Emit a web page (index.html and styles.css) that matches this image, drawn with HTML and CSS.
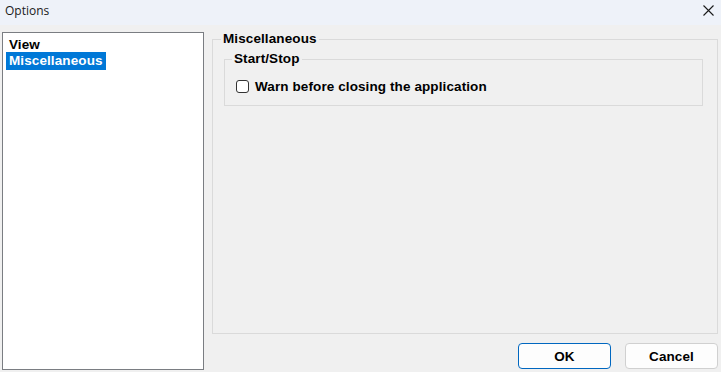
FILE: index.html
```html
<!DOCTYPE html>
<html lang="en">

<head>
    <meta charset="UTF-8" />
    <meta name="viewport" content="width=device-width, initial-scale=1.0" />
    <title>Options</title>
    <link rel="stylesheet" href="styles.css">
</head>

<body>
    <div class="titlebar">
        <span class="title">Options</span>
        <svg class="close" width="11" height="11" viewBox="0 0 11 11">
            <path d="M0.5 0.5 L10.5 10.5 M10.5 0.5 L0.5 10.5" stroke="#1a1a1a" stroke-width="1.1" fill="none" />
        </svg>
    </div>

    <div class="main">
        <ul class="pages">
            <li>View</li>
            <li class="selected">Miscellaneous</li>
        </ul>

        <div class="right">
            <fieldset class="group outer">
                <legend>Miscellaneous</legend>
                <fieldset class="group inner">
                    <legend>Start/Stop</legend>
                    <label class="check">
                        <span class="box"></span>
                        Warn before closing the application
                    </label>
                </fieldset>
            </fieldset>

            <div class="buttons">
                <button type="button" class="btn default">OK</button>
                <button type="button" class="btn">Cancel</button>
            </div>
        </div>
    </div>
</body>

</html>
```

FILE: styles.css
```css
html,
body {
    margin: 0;
    height: 100%;
}

body {
    background-color: #f0f0f0;
    font-family: "Liberation Sans", Arial, sans-serif;
    font-size: 13.5px;
    letter-spacing: 0.1px;
    font-weight: bold;
    color: #000;
    display: flex;
    flex-direction: column;
    overflow: hidden;
}

.titlebar {
    height: 25px;
    box-sizing: border-box;
    background-color: #eef2f9;
    display: flex;
    align-items: center;
    justify-content: space-between;
    padding: 0 7px 5px 5px;
    flex: none;
}

.title {
    font-family: "Open Sans", "Noto Sans", sans-serif;
    font-weight: normal;
    font-size: 12px;
    letter-spacing: 0;
    color: #1a1a1a;
}

.main {
    flex: 1;
    display: flex;
    gap: 8px;
    padding: 7px 3px 2px 2px;
    min-height: 0;
}

.pages {
    margin: 0;
    padding: 4px 0 0 5px;
    list-style: none;
    background: #fff;
    border: 1px solid #7a7d82;
    box-sizing: border-box;
    width: 202px;
}

.pages li {
    line-height: 16px;
    padding: 0 3px 0 1px;
    clear: both;
    float: left;
}

.pages li.selected {
    background-color: #0078d7;
    color: #fff;
    margin-left: -2px;
    padding: 1px 3px 1px 3px;
    margin-top: -1px;
}

.right {
    flex: 1;
    display: flex;
    flex-direction: column;
}

.group {
    margin: 0;
    border: 1px solid #dadada;
    min-width: 0;
}

.group legend {
    padding: 0 2px;
    line-height: 14px;
}

.outer {
    flex: 1;
    padding: 2px 14px 0 8px;
}

.inner {
    margin: 4px 0 0 3px;
    padding: 13px 8px 11px 7px;
}

.check {
    display: flex;
    align-items: center;
    gap: 6px;
    padding-left: 4px;
}

.box {
    width: 11px;
    height: 11px;
    border: 1px solid #333;
    border-radius: 3px;
    background: #fff;
}

.buttons {
    display: flex;
    justify-content: flex-end;
    gap: 14px;
    margin: 9px 0 1px;
}

.btn {
    width: 93px;
    height: 26px;
    font-family: "Liberation Sans", Arial, sans-serif;
    font-weight: bold;
    font-size: 13.5px;
    letter-spacing: 0.1px;
    background-color: #fdfdfd;
    border: 1px solid #d0d0d0;
    border-radius: 4px;
    color: #000;
}

.btn.default {
    border-color: #0067c0;
}
```
